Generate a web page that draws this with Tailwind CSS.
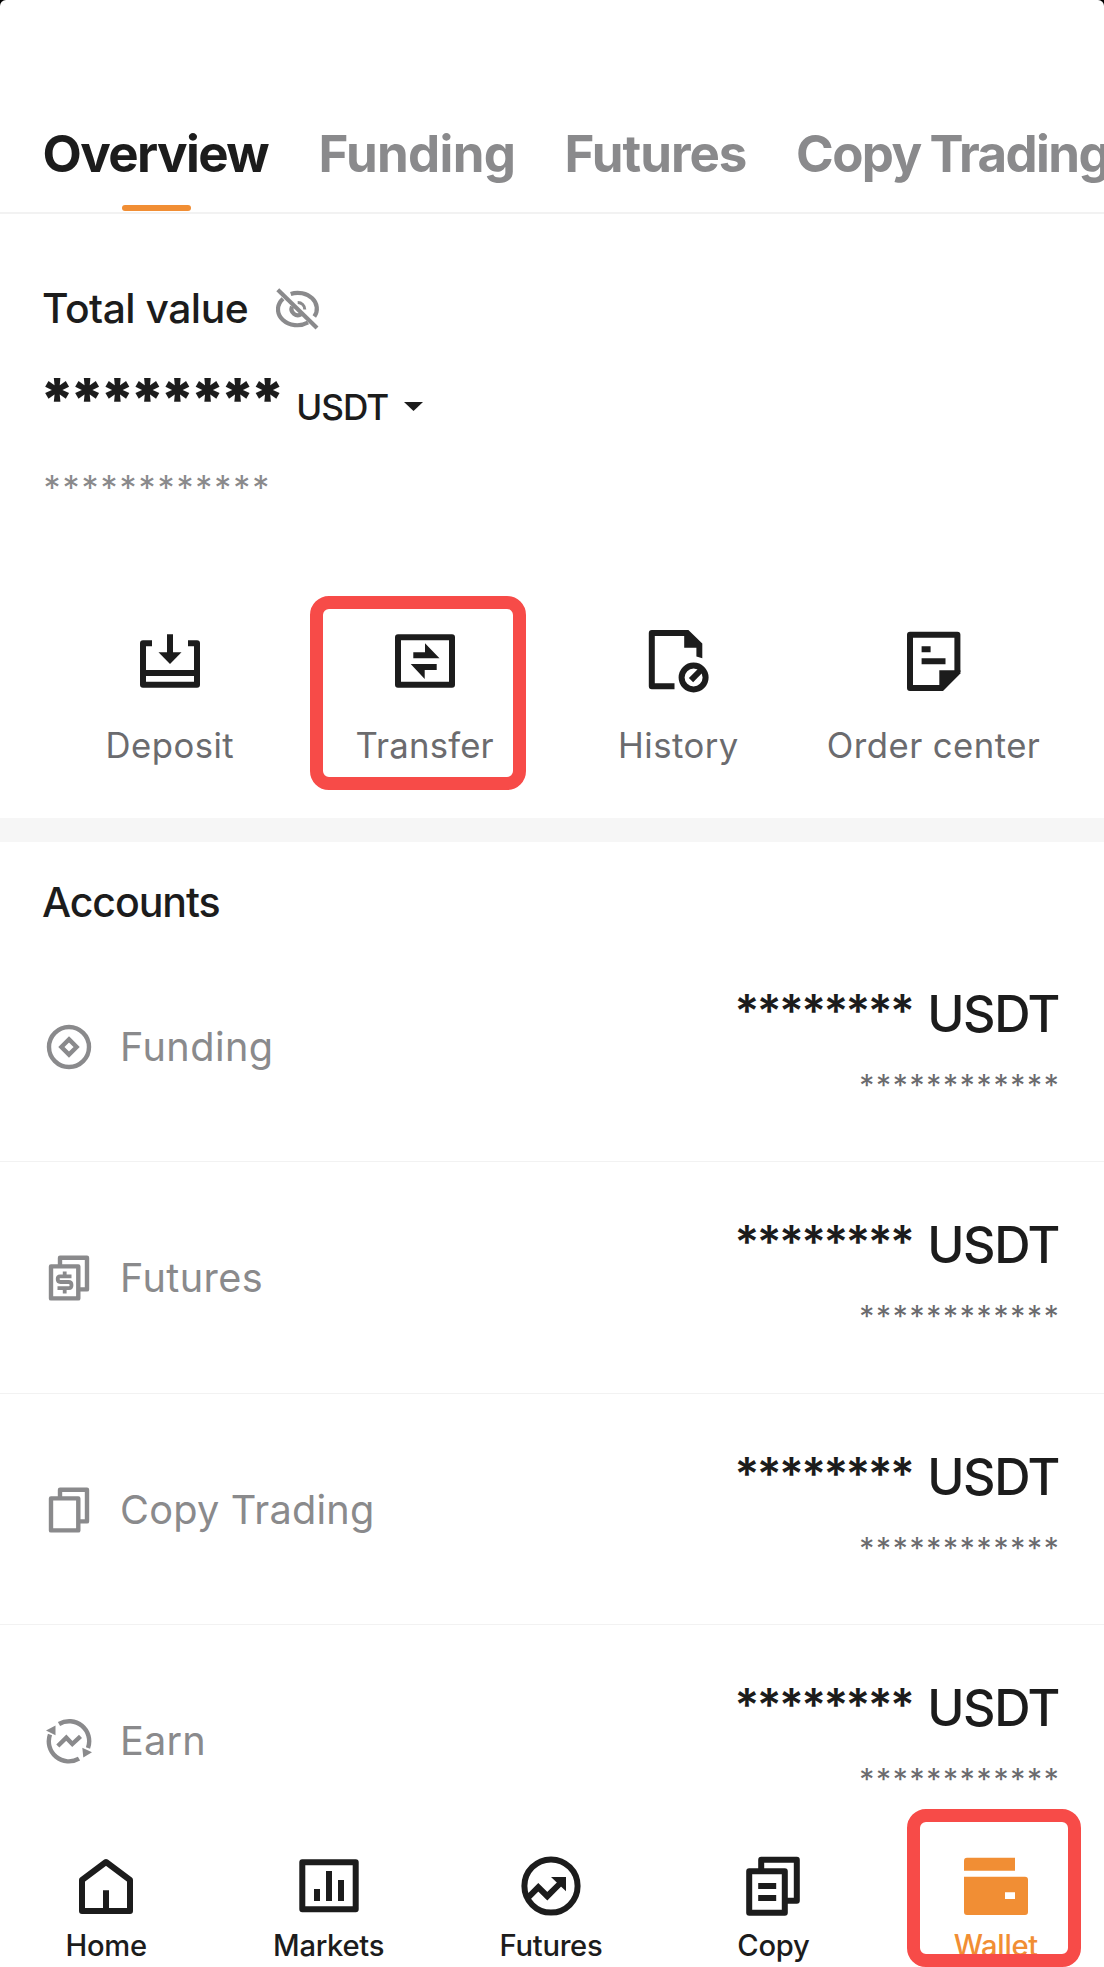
<!DOCTYPE html>
<html lang="en">
<head>
<meta charset="utf-8">
<title>Wallet</title>
<script src="https://cdn.jsdelivr.net/npm/@tailwindcss/browser@4"></script>
</head>
<body class="bg-black">
<div class="flex h-[1967px] w-[1104px] flex-col overflow-hidden rounded-t-[6px] bg-white font-['Inter',sans-serif] text-[#1c1c1c]">

  <!-- Tabs -->
  <header class="flex h-[214px] shrink-0 overflow-hidden border-b-2 border-[#f2f2f2] pt-[124px] pl-[42.5px] text-[51px]/[60px] font-bold whitespace-nowrap text-[#8a8a8c]">
    <div class="flex w-[276px] shrink-0 flex-col items-start text-[#1c1c1c]">
      <span class="tracking-[-1.6px]">Overview</span>
      <span class="mt-[21px] ml-[79.5px] h-[5.5px] w-[69px] rounded-full bg-[#f18e34]"></span>
    </div>
    <span class="w-[246px] shrink-0 tracking-[-0.7px]">Funding</span>
    <span class="w-[231.5px] shrink-0 tracking-[-1px]">Futures</span>
    <span class="tracking-[-1.6px] [word-spacing:-1.5px]">Copy Trading</span>
  </header>

  <!-- Balance -->
  <section class="flex h-[350px] shrink-0 flex-col pt-[70px] pl-[42px]">
    <div class="flex h-[48px] items-center">
      <h1 class="text-[40.8px]/[48px] font-medium tracking-[-0.5px]">Total value</h1>
      <svg class="ml-[28px]" width="44" height="43" viewBox="0 0 44 43" fill="none" stroke="#8a8a8c" stroke-width="4.2">
        <path d="M14.7 6.9A19.2 15.8 0 0 1 38.3 29.5"/>
        <path d="M7 11.8A19.2 15.8 0 0 0 32 35.5"/>
        <path d="M16 19.5A6.3 6.3 0 0 0 25.5 27"/>
        <path d="M21.7 15.5A7 7 0 0 1 28.8 22.5" stroke-width="3"/>
        <path d="M1.8 2.8L41 41"/>
      </svg>
    </div>
    <div class="mt-[35px] flex h-[64px] items-baseline">
      <span class="-ml-[2.5px] text-[58px]/[64px] font-black tracking-[-5.2px]">********</span>
      <span class="ml-[16px] text-[35.2px]/[64px] font-medium tracking-[-1px]">USDT</span>
      <svg class="mt-[35px] ml-[16px] self-start" width="19" height="9" viewBox="0 0 19 9" fill="#1c1c1c"><path d="M0 0H19L9.5 9Z"/></svg>
    </div>
    <div class="mt-[35px] pl-[1.5px] text-[34px]/[44px] tracking-[1.95px] text-[#8a8a8c]">************</div>
  </section>

  <!-- Quick actions -->
  <section class="grid h-[254px] shrink-0 grid-cols-4 px-[42.5px] pt-[64px] text-[34.7px]/[44px] tracking-[0.45px] text-[#6b6b6e]">
    <div class="flex flex-col items-center">
      <svg width="60" height="65" viewBox="0 0 60 65" fill="none" stroke="#1c1c1c" stroke-width="6" stroke-linejoin="round">
        <path d="M12 15.3H3V56.7H57V15.3H48M3 45H57M30 6.3V26"/>
        <path d="M18.5 24.3H41.5L30 36Z" fill="#1c1c1c" stroke="none"/>
      </svg>
      <span class="mt-[30px]">Deposit</span>
    </div>
    <div class="relative flex flex-col items-center">
      <svg width="60" height="65" viewBox="0 0 60 65" fill="#1c1c1c">
        <rect x="3" y="9.3" width="54" height="47.4" fill="none" stroke="#1c1c1c" stroke-width="6" stroke-linejoin="round"/>
        <path d="M18.3 24.3H30V15.3L44.5 30.3H18.3Z"/>
        <path d="M15.7 36H41.7V42H29.7V51Z"/>
      </svg>
      <span class="mt-[30px] tracking-[0.2px]">Transfer</span>
      <div class="absolute top-[-32px] left-[12.5px] h-[194px] w-[216px] rounded-[19px] border-[13px] border-[#f74b48]"></div>
    </div>
    <div class="flex flex-col items-center">
      <svg class="-ml-[1px]" width="61" height="65" viewBox="0 0 61 65" fill="none" stroke="#1c1c1c" stroke-width="6">
        <path d="M26.5 58.3H3.8V5H39" stroke-linejoin="round"/>
        <path d="M36.2 2H40.4L54.3 15.5V30.3L48.4 28.5V19.7H36.2Z" fill="#1c1c1c" stroke="none"/>
        <circle cx="45.6" cy="49.5" r="12"/>
        <path d="M43 52.1L53.5 41.5"/>
      </svg>
      <span class="mt-[30px] -ml-[2px]">History</span>
    </div>
    <div class="flex flex-col items-center">
      <svg class="-ml-[1px]" width="61" height="65" viewBox="0 0 61 65" fill="none" stroke="#1c1c1c" stroke-width="6">
        <path d="M39 60H7V6.7H54.4V44" stroke-linejoin="round"/>
        <path d="M36.3 42.3H57.4V45.5L40 63H36.3Z" fill="#1c1c1c" stroke="none"/>
        <path d="M18.6 21.3H27.6M18.6 33.3H42.5"/>
      </svg>
      <span class="mt-[30px] -ml-[1px]">Order center</span>
    </div>
  </section>

  <div class="h-[24px] shrink-0 bg-[#f6f6f6]"></div>

  <!-- Accounts -->
  <section class="flex h-[958px] shrink-0 flex-col overflow-hidden">
    <h2 class="h-[89px] shrink-0 pt-[36px] pl-[42px] text-[41.1px]/[48px] font-medium tracking-[-1.1px]">Accounts</h2>

    <div class="flex h-[231.4px] shrink-0 justify-between border-b-[1.5px] border-[#f2f2f2] pr-[45px] pl-[46px]">
      <div class="mt-[93px] flex h-[46px] items-center gap-[28px] text-[39.7px]/[46px] tracking-[0.4px] text-[#8a8a8c]">
        <svg width="46" height="46" viewBox="0 0 46 46" fill="none" stroke="#8a8a8c" stroke-width="4.4">
          <circle cx="23" cy="23" r="20"/><path d="M23 15.4L30.6 23L23 30.6L15.4 23Z"/>
        </svg>
        <span>Funding</span>
      </div>
      <div class="flex flex-col items-end pt-[52.5px]">
        <div class="flex items-baseline text-[50.3px]/[60px] font-medium"><span class="-translate-y-[4px] text-[46px]/[60px] font-semibold tracking-[-2.6px]">********</span><span class="ml-[15px] tracking-[-1.4px]">USDT</span></div>
        <div class="mt-[22px] -mr-[1.5px] text-[30px]/[36px] tracking-[1.75px] text-[#6b6b6e]">************</div>
      </div>
    </div>

    <div class="flex h-[231.4px] shrink-0 justify-between border-b-[1.5px] border-[#f2f2f2] pr-[45px] pl-[46px]">
      <div class="mt-[93px] flex h-[46px] items-center gap-[28px] text-[39.7px]/[46px] tracking-[0.4px] text-[#8a8a8c]">
        <svg width="46" height="46" viewBox="0 0 46 46" fill="none" stroke="#8a8a8c" stroke-width="4.4" stroke-linejoin="round">
          <rect x="5" y="11.4" width="27.3" height="32"/><path d="M14 11V2.7H41V34.4H33"/>
          <path d="M25.5 21.3H14Q11.7 21.3 11.7 24Q11.7 27 14.5 27H22.5Q25.5 27 25.5 30Q25.5 33.2 23 33.2H11.5M18.7 16.5V21M18.7 33V38.5" stroke-width="3.8" stroke-linejoin="miter"/>
        </svg>
        <span>Futures</span>
      </div>
      <div class="flex flex-col items-end pt-[52.5px]">
        <div class="flex items-baseline text-[50.3px]/[60px] font-medium"><span class="-translate-y-[4px] text-[46px]/[60px] font-semibold tracking-[-2.6px]">********</span><span class="ml-[15px] tracking-[-1.4px]">USDT</span></div>
        <div class="mt-[22px] -mr-[1.5px] text-[30px]/[36px] tracking-[1.75px] text-[#6b6b6e]">************</div>
      </div>
    </div>

    <div class="flex h-[231.4px] shrink-0 justify-between border-b-[1.5px] border-[#f2f2f2] pr-[45px] pl-[46px]">
      <div class="mt-[93.5px] flex h-[46px] items-center gap-[28px] text-[39.7px]/[46px] tracking-[0.2px] text-[#8a8a8c]">
        <svg width="46" height="46" viewBox="0 0 46 46" fill="none" stroke="#8a8a8c" stroke-width="4.4" stroke-linejoin="round">
          <rect x="5" y="11.4" width="27.3" height="32"/><path d="M14 11V2.7H41V34.4H33"/>
        </svg>
        <span>Copy Trading</span>
      </div>
      <div class="flex flex-col items-end pt-[53px]">
        <div class="flex items-baseline text-[50.3px]/[60px] font-medium"><span class="-translate-y-[4px] text-[46px]/[60px] font-semibold tracking-[-2.6px]">********</span><span class="ml-[15px] tracking-[-1.4px]">USDT</span></div>
        <div class="mt-[22px] -mr-[1.5px] text-[30px]/[36px] tracking-[1.75px] text-[#6b6b6e]">************</div>
      </div>
    </div>

    <div class="flex h-[231.4px] shrink-0 justify-between pr-[45px] pl-[46px]">
      <div class="mt-[93px] flex h-[46px] items-center gap-[28px] text-[39.7px]/[46px] tracking-[0.2px] text-[#8a8a8c]">
        <svg width="46" height="46" viewBox="0 0 46 46" fill="none" stroke="#8a8a8c" stroke-width="4.4">
          <path d="M13 6A20 20 0 0 1 42 30M4 16.6A20 20 0 0 0 33 40.6M11.8 28L20.3 19.7L26.3 26L34.5 18.3"/>
          <path d="M36.3 29.8L46 34.3L37.3 39.5ZM9.5 7.5V17.3L0 12.5Z" fill="#8a8a8c" stroke="none"/>
        </svg>
        <span>Earn</span>
      </div>
      <div class="flex flex-col items-end pt-[52.5px]">
        <div class="flex items-baseline text-[50.3px]/[60px] font-medium"><span class="-translate-y-[4px] text-[46px]/[60px] font-semibold tracking-[-2.6px]">********</span><span class="ml-[15px] tracking-[-1.4px]">USDT</span></div>
        <div class="mt-[22px] -mr-[1.5px] text-[30px]/[36px] tracking-[1.75px] text-[#6b6b6e]">************</div>
      </div>
    </div>
  </section>

  <!-- Bottom navigation -->
  <nav class="-mr-[3px] -ml-[5px] grid h-[167px] shrink-0 grid-cols-5 pt-[56px] text-[29.2px]/[36px] font-medium tracking-[-0.3px]">
    <div class="flex flex-col items-center">
      <svg width="60" height="60" viewBox="0 0 60 60" fill="none" stroke="#1c1c1c" stroke-width="6" stroke-linejoin="round">
        <path d="M6 55H54V24L30 6L6 24ZM30 55V34.3"/>
      </svg>
      <span class="mt-[12px]">Home</span>
    </div>
    <div class="flex flex-col items-center">
      <svg width="60" height="60" viewBox="0 0 60 60" fill="none" stroke="#1c1c1c" stroke-width="6" stroke-linejoin="round">
        <rect x="3.3" y="6.3" width="53.4" height="47"/><path d="M18 33V45M30 15V45M42 24V45"/>
      </svg>
      <span class="mt-[12px]">Markets</span>
    </div>
    <div class="flex flex-col items-center">
      <svg width="60" height="60" viewBox="0 0 60 60" fill="none" stroke="#1c1c1c" stroke-width="6">
        <circle cx="30" cy="30" r="26.6"/><path d="M7 41.6L17.3 31.3L26.3 40.2L40 26.5"/><path d="M30 21H45V35.3Z" fill="#1c1c1c" stroke="none"/>
      </svg>
      <span class="mt-[12px]">Futures</span>
    </div>
    <div class="flex flex-col items-center">
      <svg width="60" height="60" viewBox="0 0 60 60" fill="none" stroke="#1c1c1c" stroke-width="6" stroke-linejoin="round">
        <rect x="6.2" y="15.3" width="35.6" height="41.4"/><path d="M18.2 15V3.7H53.8V44.7H43M15.2 30H33.2M15.2 42H33.2"/>
      </svg>
      <span class="mt-[12px]">Copy</span>
    </div>
    <div class="relative flex flex-col items-center text-[#f18e34]">
      <svg width="64" height="60" viewBox="0 0 64 60" fill="#f18e34">
        <path d="M3 1.7H51V14.7H0V4.7Q0 1.7 3 1.7Z"/>
        <path fill-rule="evenodd" d="M0 20.7H61Q64 20.7 64 23.7V56Q64 59 61 59H3Q0 59 0 56ZM41 36.3V43H51V36.3Z"/>
      </svg>
      <span class="mt-[12px]">Wallet</span>
      <div class="absolute top-[-47px] left-[22px] h-[158px] w-[174px] rounded-[19px] border-[13px] border-[#f74b48]"></div>
    </div>
  </nav>
</div>
</body>
</html>
